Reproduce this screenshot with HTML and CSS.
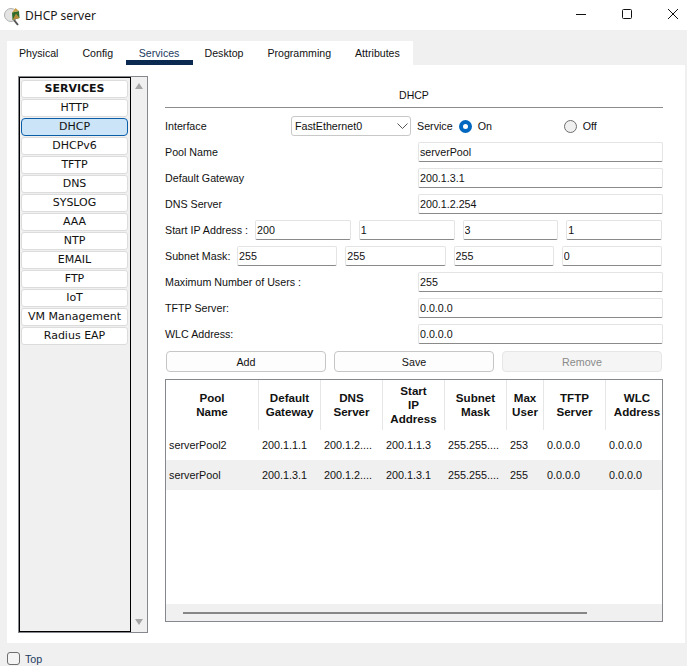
FILE: index.html
```html
<!DOCTYPE html>
<html lang="en">
<head>
<meta charset="utf-8">
<title>DHCP server</title>
<link rel="stylesheet" href="styles.css">
</head>
<body>
<div class="window">
  <header class="titlebar">
    <svg class="app-icon" width="20" height="22" viewBox="0 0 20 22">
      <circle cx="8" cy="10" r="6.5" fill="#e4e4e4" stroke="#b0b0b0"/>
      <path d="M9 7.5 L16 6 L16.500 13 L9.500 15 Z" fill="#2f6b2a"/>
      <path d="M9 7.500 L12.500 3 L16 6 Z" fill="#c9a24a"/>
      <path d="M9.500 15 L16.500 13 L13 8.500 Z" fill="#b58c3a"/>
      <path d="M11 15 L15 20" stroke="#555" stroke-width="2"/>
    </svg>
    <span class="title">DHCP server</span>
    <div class="winbtns">
      <svg width="12" height="12" viewBox="0 0 12 12"><path d="M1 6.500H11" stroke="#111"/></svg>
      <svg width="12" height="12" viewBox="0 0 12 12"><rect x="1.500" y="1.500" width="9" height="9" rx="1" fill="none" stroke="#111"/></svg>
      <svg width="12" height="12" viewBox="0 0 12 12"><path d="M1 1L11 11M11 1L1 11" stroke="#111"/></svg>
    </div>
  </header>

  <nav class="tabs">
    <span class="tab">Physical</span>
    <span class="tab">Config</span>
    <span class="tab active">Services</span>
    <span class="tab">Desktop</span>
    <span class="tab">Programming</span>
    <span class="tab">Attributes</span>
  </nav>

  <div class="panel">
    <aside class="sidebar">
      <div class="svc-list">
        <div class="svc head">SERVICES</div>
        <div class="svc">HTTP</div>
        <div class="svc selected">DHCP</div>
        <div class="svc">DHCPv6</div>
        <div class="svc">TFTP</div>
        <div class="svc">DNS</div>
        <div class="svc">SYSLOG</div>
        <div class="svc">AAA</div>
        <div class="svc">NTP</div>
        <div class="svc">EMAIL</div>
        <div class="svc">FTP</div>
        <div class="svc">IoT</div>
        <div class="svc">VM Management</div>
        <div class="svc">Radius EAP</div>
      </div>
      <div class="vscroll">
        <span class="arrow up"></span>
        <span class="arrow down"></span>
      </div>
    </aside>

    <main class="main">
      <h2 class="heading">DHCP</h2>

      <div class="row row-iface">
        <label class="lbl lbl-iface">Interface</label>
        <div class="select">
          <span>FastEthernet0</span>
          <svg width="11" height="6" viewBox="0 0 11 6"><path d="M0.500 0.500L5.500 5.500L10.500 0.500" fill="none" stroke="#555"/></svg>
        </div>
        <span class="lbl lbl-service">Service</span>
        <span class="radio on"></span>
        <span class="lbl lbl-on">On</span>
        <span class="radio"></span>
        <span class="lbl lbl-off">Off</span>
      </div>

      <div class="row"><label class="lbl lbl-wide">Pool Name</label><input class="field wide" value="serverPool"></div>
      <div class="row"><label class="lbl lbl-wide">Default Gateway</label><input class="field wide" value="200.1.3.1"></div>
      <div class="row"><label class="lbl lbl-wide">DNS Server</label><input class="field wide" value="200.1.2.254"></div>

      <div class="row row-ip">
        <label class="lbl lbl-ip">Start IP Address :</label>
        <div class="octets">
          <input class="field" value="200"><input class="field" value="1"><input class="field" value="3"><input class="field" value="1">
        </div>
      </div>
      <div class="row row-ip">
        <label class="lbl lbl-mask">Subnet Mask:</label>
        <div class="octets">
          <input class="field" value="255"><input class="field" value="255"><input class="field" value="255"><input class="field" value="0">
        </div>
      </div>

      <div class="row"><label class="lbl lbl-wide">Maximum Number of Users :</label><input class="field wide" value="255"></div>
      <div class="row"><label class="lbl lbl-wide">TFTP Server:</label><input class="field wide" value="0.0.0.0"></div>
      <div class="row"><label class="lbl lbl-wide">WLC Address:</label><input class="field wide" value="0.0.0.0"></div>

      <div class="actions">
        <button class="btn">Add</button>
        <button class="btn">Save</button>
        <button class="btn disabled">Remove</button>
      </div>

      <div class="table-wrap">
        <div class="grid thead">
          <div>Pool<br>Name</div>
          <div>Default<br>Gateway</div>
          <div>DNS<br>Server</div>
          <div>Start<br>IP<br>Address</div>
          <div>Subnet<br>Mask</div>
          <div>Max<br>User</div>
          <div>TFTP<br>Server</div>
          <div>WLC<br>Address</div>
        </div>
        <div class="grid trow">
          <div>serverPool2</div><div>200.1.1.1</div><div>200.1.2....</div><div>200.1.1.3</div><div>255.255....</div><div>253</div><div>0.0.0.0</div><div>0.0.0.0</div>
        </div>
        <div class="grid trow alt">
          <div>serverPool</div><div>200.1.3.1</div><div>200.1.2....</div><div>200.1.3.1</div><div>255.255....</div><div>255</div><div>0.0.0.0</div><div>0.0.0.0</div>
        </div>
        <div class="hscroll"><span class="thumb"></span></div>
      </div>
    </main>
  </div>

  <footer class="footer">
    <span class="check"></span>
    <span class="top-label">Top</span>
  </footer>
</div>
</body>
</html>
```

FILE: styles.css
```css
* { box-sizing: border-box; }

html, body {
  margin: 0;
  padding: 0;
}

body {
  width: 687px;
  height: 666px;
  overflow: hidden;
  background: #f0f0f0;
  font-family: "Liberation Sans", Arial, sans-serif;
  font-size: 11px;
  color: #111;
}

.window {
  display: flex;
  flex-direction: column;
  height: 666px;
}

/* Title bar */
.titlebar {
  height: 30px;
  flex: none;
  background: #fff;
  display: flex;
  align-items: center;
  padding-left: 3px;
}

.app-icon { flex: none; margin-right: 2px; margin-top: 1px; }

.title {
  font-family: "Noto Sans", "Open Sans", sans-serif;
  font-size: 12px;
  color: #1a1a1a;
}

.winbtns {
  margin-left: auto;
  display: flex;
  gap: 34px;
  padding-right: 8px;
  margin-bottom: 2px;
}

/* Tabs */
.tabs {
  margin: 11px 0 0 7px;
  width: 406px;
  height: 24px;
  flex: none;
  background: #fff;
  display: flex;
}

.tab {
  padding: 0 12px;
  height: 24px;
  line-height: 24px;
  font-size: 10.6px;
  color: #111;
}

.tab.active {
  color: #1c3a5e;
  border-bottom: 5px solid #0a2a52;
  width: 67px;
  margin-left: 0.5px;
  text-align: center;
  padding: 0;
}

/* Main panel */
.panel {
  margin-left: 7px;
  width: 678px;
  height: 578px;
  flex: none;
  background: #fff;
  display: flex;
  padding: 11px 0 0 11px;
}

/* Sidebar */
.sidebar {
  width: 130px;
  height: 557px;
  flex: none;
  border: 1px solid #85898d;
  display: flex;
  background: #f0f0f0;
}

.svc-list {
  width: 112px;
  height: 555px;
  flex: none;
  border: 1px solid #000;
  padding: 2px 2px 0 1px;
  background: #f0f0f0;
  display: flex;
  flex-direction: column;
  gap: 1px;
}

.svc {
  height: 18px;
  flex: none;
  background: #fff;
  border: 1px solid #dcdcdc;
  border-radius: 3px;
  text-align: center;
  font-family: "DejaVu Sans", Verdana, sans-serif;
  font-size: 11px;
  line-height: 16px;
  color: #111;
}

.svc.head { font-weight: 700; }

.svc.selected {
  background: #cce4f7;
  border-color: #0a5ea8;
  border-radius: 4px;
}

.vscroll {
  flex: 1;
  display: flex;
  flex-direction: column;
  justify-content: space-between;
  align-items: center;
  padding: 6px 0 7px;
}

.arrow {
  width: 0;
  height: 0;
  border-left: 4px solid transparent;
  border-right: 4px solid transparent;
}

.arrow.up { border-bottom: 6px solid #a6a6a6; }
.arrow.down { border-top: 6px solid #a6a6a6; }

/* Form */
.main {
  width: 498px;
  margin-left: 17px;
  padding-top: 10px;
  flex: none;
}

.heading {
  margin: 1px 0 8px;
  height: 21px;
  border-bottom: 1px solid #8c8c8c;
  text-align: center;
  font-weight: 400;
  font-size: 10.5px;
  line-height: 14px;
  padding-top: 1px;
}

.row {
  display: flex;
  align-items: center;
  height: 20px;
  margin-bottom: 6px;
}

.lbl {
  font-size: 10.7px;
  white-space: nowrap;
  color: #111;
}

.lbl-wide { width: 253px; flex: none; }
.lbl-iface { width: 126px; flex: none; }
.lbl-service { margin-right: 6px; }
.lbl-on { width: 86px; flex: none; margin-left: 6px; }
.lbl-off { margin-left: 6px; }
.lbl-ip { width: 90px; flex: none; }
.lbl-mask { width: 72px; flex: none; }

.select {
  width: 120px;
  height: 20px;
  flex: none;
  margin-right: 6px;
  border: 1px solid #c8c8c8;
  border-radius: 3px;
  background: #fff;
  display: flex;
  align-items: center;
  justify-content: space-between;
  padding: 0 1px 0 3px;
  font-size: 10.7px;
}

.select svg { margin-right: 1px; }

.radio {
  width: 13px;
  height: 13px;
  flex: none;
  border: 1px solid #6e6e6e;
  border-radius: 50%;
  background: #f0f0f0;
}

.radio.on {
  background: #fff;
  border: 4px solid #0067c0;
}

.field {
  height: 20px;
  padding: 0 1px;
  margin: 0;
  border: 1px solid #e4e4e4;
  border-bottom: 1px solid #8a8a8a;
  border-radius: 2px;
  background: #fff;
  font-family: "Liberation Sans", Arial, sans-serif;
  font-size: 10.7px;
  color: #111;
  outline: none;
  min-width: 0;
}

.wide { width: 245px; flex: none; }

.octets {
  flex: 1;
  display: grid;
  grid-template-columns: repeat(4, 1fr);
  column-gap: 8px;
  padding-right: 1px;
}

.octets .field { width: 100%; }

/* Buttons */
.actions {
  display: grid;
  grid-template-columns: repeat(3, 160px);
  column-gap: 8px;
  padding-left: 1px;
  margin-top: 7px;
  margin-bottom: 7px;
}

.btn {
  height: 21px;
  padding: 0;
  border: 1px solid #c6c6c6;
  border-radius: 4px;
  background: #fdfdfd;
  font-family: "Liberation Sans", Arial, sans-serif;
  font-size: 10.7px;
  color: #111;
}

.btn.disabled {
  background: #f5f5f5;
  border-color: #e6e6e6;
  color: #8a8a8a;
}

/* Table */
.table-wrap {
  width: 498px;
  height: 243px;
  border: 1px solid #85898d;
  position: relative;
  background: #fff;
  overflow: hidden;
}

.grid {
  display: grid;
  grid-template-columns: 93px 62px 62px 62px 62px 37px 62px 62px;
}

.thead {
  height: 50px;
  font-weight: 700;
  font-size: 11.6px;
  line-height: 14px;
  text-align: center;
}

.thead > div {
  display: flex;
  align-items: center;
  justify-content: center;
  border-right: 1px solid #e6e6e6;
}

.thead > div:last-child { border-right: 0; white-space: nowrap; }

.trow {
  height: 30px;
  font-size: 10.8px;
  line-height: 30px;
  white-space: nowrap;
}

.trow > div { padding-left: 3px; }

.trow.alt { background: #f0f0f0; }

.hscroll {
  position: absolute;
  left: 0;
  right: 0;
  bottom: 0;
  height: 17px;
  background: #f0f0f0;
  display: flex;
  align-items: center;
  padding-left: 17px;
}

.thumb {
  width: 404px;
  height: 2px;
  background: #868686;
}

/* Footer */
.footer {
  flex: 1;
  display: flex;
  align-items: flex-start;
  padding: 9px 0 0 7px;
}

.check {
  width: 13px;
  height: 13px;
  border: 1px solid #6e6e6e;
  border-radius: 3px;
  background: #f4f4f4;
  flex: none;
}

.top-label {
  margin-left: 5px;
  font-size: 10.7px;
  line-height: 14px;
  color: #1c3a5e;
}
```
